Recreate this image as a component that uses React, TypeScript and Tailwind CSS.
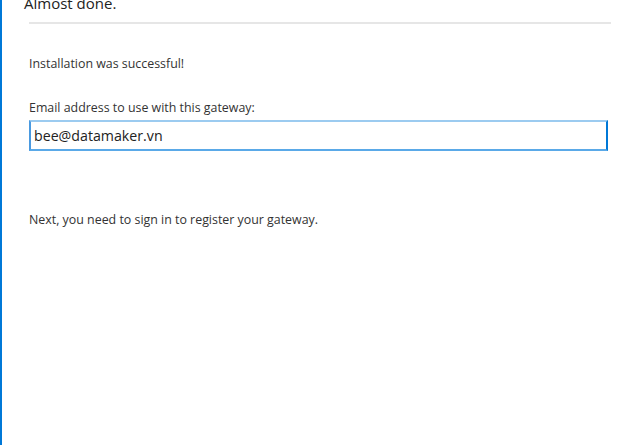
export default function App() {
  return (
    <div className="w-[639px] h-[445px] bg-white flex overflow-hidden font-['Open_Sans',sans-serif] text-[#333]">
      <div className="w-[2px] h-full bg-[#0078d7]" />
      <div className="flex-1 flex flex-col">
        <div className="h-[22px] overflow-hidden flex items-end pl-[22px]">
          <h1 className="text-[15px] leading-[20px] text-[#222] mb-[9px]">Almost done.</h1>
        </div>
        <div className="ml-[27px] w-[582px] h-[2px] bg-[#e6e6e6]" />
        <div className="pl-[27px] flex flex-col">
          <p className="mt-[32px] text-[12.4px] leading-[16px]">Installation was successful!</p>
          <label className="mt-[28px] text-[12.4px] leading-[16px]">Email address to use with this gateway:</label>
          <div className="mt-[4px] w-[579px] h-[31px] border-2 border-t-[#9ccbf0] border-l-[#4a9ae0] border-r-[#0078d7] border-b-[#5aa9e8] flex items-center px-[3px]">
            <span className="text-[14.2px] text-[#222]">bee@datamaker.vn</span>
          </div>
          <p className="mt-[61px] text-[12.4px] leading-[16px]">Next, you need to sign in to register your gateway.</p>
        </div>
      </div>
    </div>
  );
}
